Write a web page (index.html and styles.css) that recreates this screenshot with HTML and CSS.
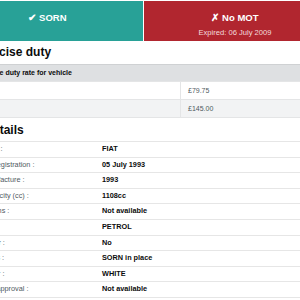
FILE: index.html
```html
<!DOCTYPE html>
<html lang="en">
<head>
<meta charset="utf-8">
<title>Vehicle check</title>
<link rel="stylesheet" href="styles.css">
</head>
<body>
<div class="page">
  <div class="status">
    <div class="tile tile-ok"><div class="tile-title">&#10004; SORN</div></div>
    <div class="tile tile-bad">
      <div class="tile-title">&#10007; No MOT</div>
      <div class="tile-sub">Expired: 06 July 2009</div>
    </div>
  </div>

  <h2 class="heading heading-duty">Vehicle excise duty</h2>
  <div class="duty">
    <div class="duty-head">Vehicle excise duty rate for vehicle</div>
    <div class="duty-row">
      <div class="duty-label">6 months rate</div>
      <div class="duty-value">£79.75</div>
    </div>
    <div class="duty-row duty-row-alt">
      <div class="duty-label">12 months rate</div>
      <div class="duty-value">£145.00</div>
    </div>
  </div>

  <h2 class="heading heading-details">Vehicle details</h2>
  <div class="details">
    <div class="row"><div class="label">Vehicle make :</div><div class="value">FIAT</div></div>
    <div class="row"><div class="label">Date of first registration :</div><div class="value">05 July 1993</div></div>
    <div class="row"><div class="label">Year of manufacture :</div><div class="value">1993</div></div>
    <div class="row"><div class="label">Cylinder capacity (cc) :</div><div class="value">1108cc</div></div>
    <div class="row"><div class="label">CO2 Emissions :</div><div class="value">Not available</div></div>
    <div class="row"><div class="label">Fuel type :</div><div class="value">PETROL</div></div>
    <div class="row"><div class="label">Export marker :</div><div class="value">No</div></div>
    <div class="row"><div class="label">Vehicle status :</div><div class="value">SORN in place</div></div>
    <div class="row"><div class="label">Vehicle colour :</div><div class="value">WHITE</div></div>
    <div class="row"><div class="label">Vehicle type approval :</div><div class="value">Not available</div></div>
  </div>
</div>
</body>
</html>
```

FILE: styles.css
```css
html, body {
  margin: 0;
  padding: 0;
  overflow: hidden;
  background: #ffffff;
}

body {
  width: 300px;
  height: 300px;
  font-family: "Liberation Sans", Arial, sans-serif;
  color: #0b0c0c;
}

.page {
  margin-left: -48px;
  width: 383px;
  padding-top: 1px;
}

.status {
  display: grid;
  grid-template-columns: 191px 182px;
  column-gap: 1px;
  height: 40px;
}

.tile {
  color: #ffffff;
  text-align: center;
  padding-top: 10px;
  box-sizing: border-box;
}

.tile-ok {
  background: #28a197;
}

.tile-bad {
  background: #b1262f;
}

.tile-title {
  font-size: 9.5px;
  font-weight: bold;
  line-height: 13px;
}

.tile-sub {
  font-size: 7.6px;
  line-height: 10px;
  margin-top: 4px;
  color: #f3dcdd;
}

.heading {
  font-size: 12px;
  line-height: 12px;
  font-weight: bold;
  margin: 0 0 0 -11px;
}

.heading-duty {
  margin-top: 5px;
  margin-bottom: 6px;
}

.heading-details {
  margin-top: 6px;
  margin-bottom: 5px;
}

.duty {
  font-size: 7px;
}

.duty-head {
  background: #dee0e2;
  border-top: 1px solid #cfd1d3;
  height: 16px;
  line-height: 16px;
  font-weight: bold;
  padding-left: 4px;
}

.duty-row {
  display: grid;
  grid-template-columns: 228px 1fr;
  height: 17px;
  border-top: 1px solid #e4e5e6;
}

.duty-row-alt {
  background: #f2f3f4;
  border-bottom: 1px solid #e4e5e6;
}

.duty-label {
  color: transparent;
  line-height: 17px;
  padding-left: 4px;
}

.duty-value {
  line-height: 17px;
  padding-left: 7px;
  color: #505a5f;
  border-left: 1px solid #e4e5e6;
}

.details {
  font-size: 7.3px;
  border-bottom: 1px solid #e6e6e6;
}

.row {
  display: grid;
  grid-template-columns: 150px 1fr;
  height: 15.6px;
  line-height: 14.6px;
  border-top: 1px solid #e6e6e6;
  box-sizing: border-box;
}

.label {
  padding-left: 3px;
  color: #505a5f;
}

.value {
  font-weight: bold;
}
```
